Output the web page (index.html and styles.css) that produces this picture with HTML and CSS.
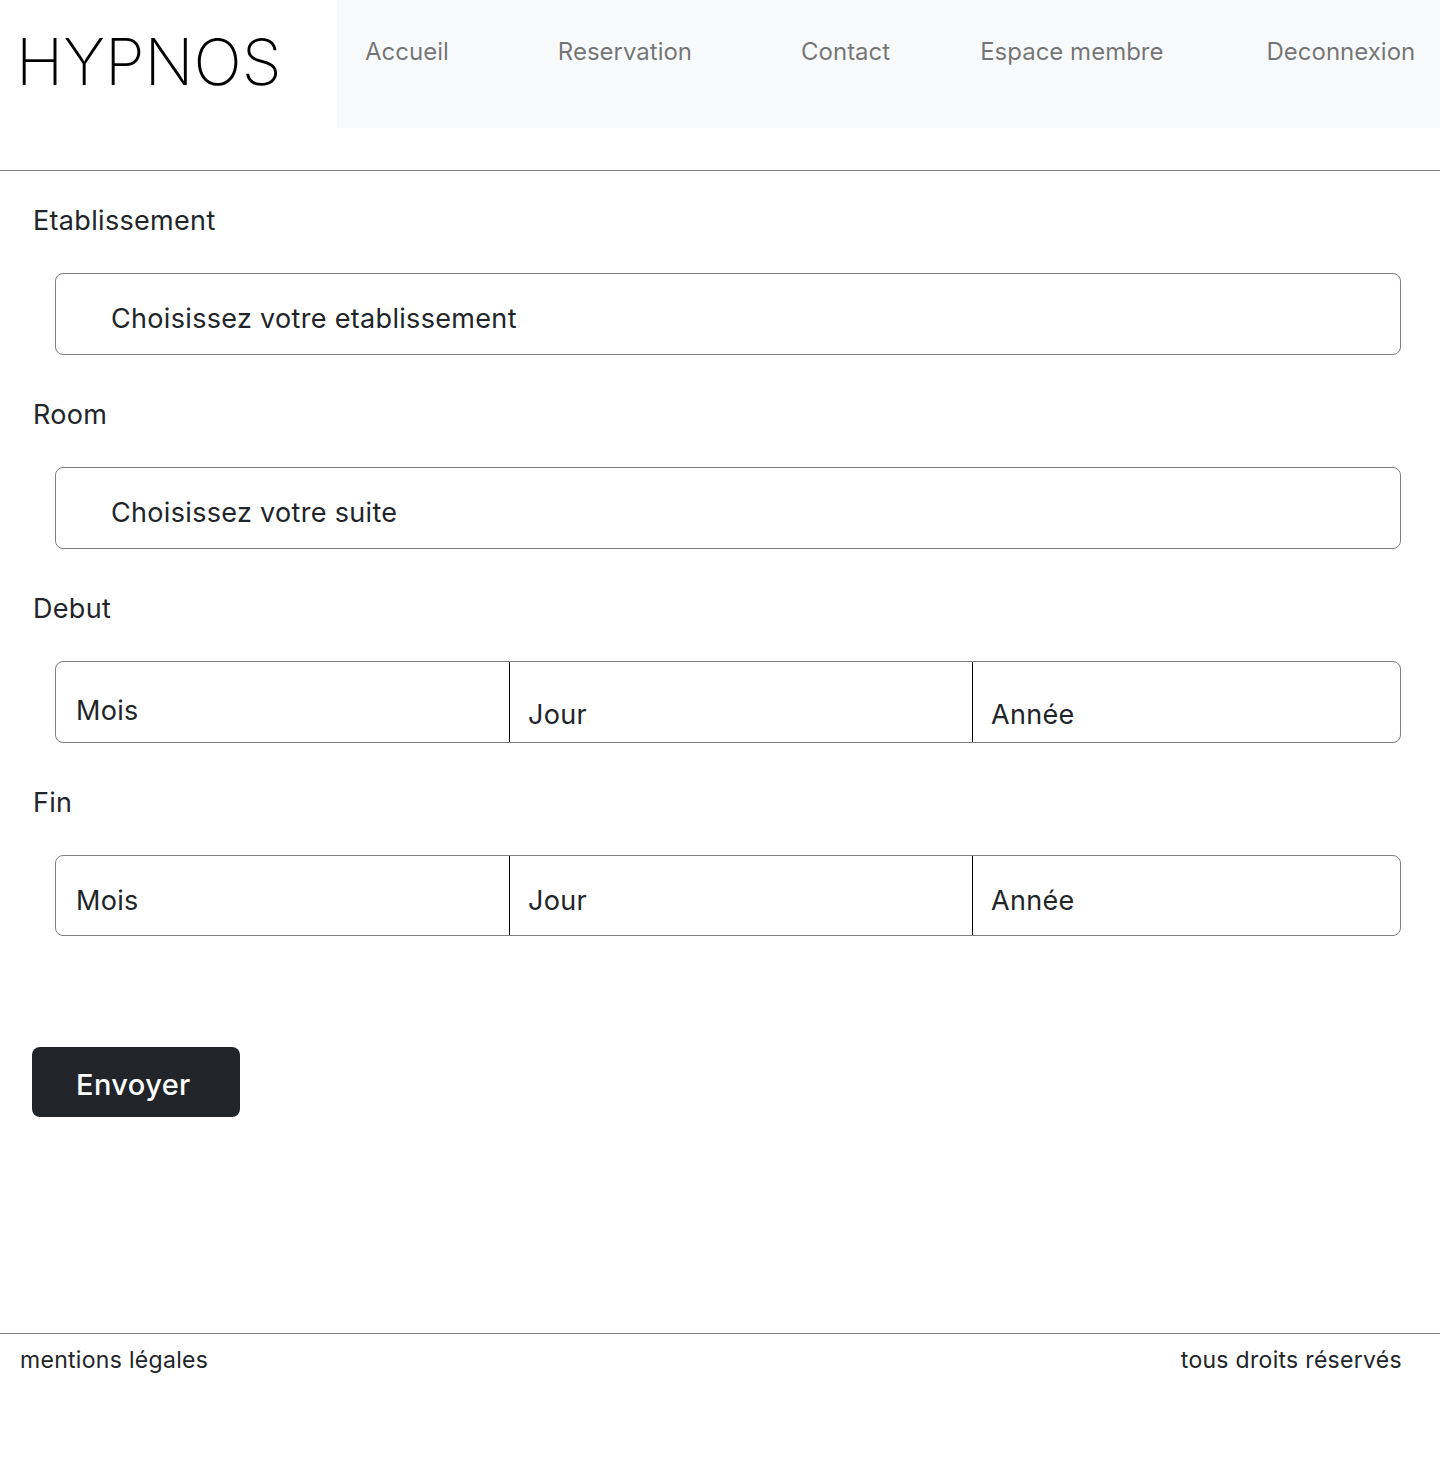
FILE: index.html
```html
<!DOCTYPE html>
<html lang="fr">
<head>
<meta charset="utf-8">
<title>Hypnos - Reservation</title>
<link rel="stylesheet" href="styles.css">
</head>
<body>
<header class="header">
  <div class="brand">HYPNOS</div>
  <nav class="nav">
    <a class="nav-link l1" href="#">Accueil</a>
    <a class="nav-link l2" href="#">Reservation</a>
    <a class="nav-link l3" href="#">Contact</a>
    <a class="nav-link l4" href="#">Espace membre</a>
    <a class="nav-link l5" href="#">Deconnexion</a>
  </nav>
</header>
<hr class="rule top-rule">
<main class="form">
  <div class="field">
    <label class="label">Etablissement</label>
    <div class="select"><span>Choisissez votre etablissement</span></div>
  </div>
  <div class="field">
    <label class="label">Room</label>
    <div class="select"><span>Choisissez votre suite</span></div>
  </div>
  <div class="field">
    <label class="label">Debut</label>
    <div class="dates">
      <div class="cell c1 up">Mois</div>
      <div class="cell c2">Jour</div>
      <div class="cell c3">Année</div>
    </div>
  </div>
  <div class="field">
    <label class="label">Fin</label>
    <div class="dates dates-end">
      <div class="cell c1 mid">Mois</div>
      <div class="cell c2 mid">Jour</div>
      <div class="cell c3 mid">Année</div>
    </div>
  </div>
  <button class="btn" type="button">Envoyer</button>
</main>
<footer class="footer">
  <hr class="rule">
  <div class="footer-row">
    <span>mentions légales</span>
    <span>tous droits réservés</span>
  </div>
</footer>
</body>
</html>
```
FILE: styles.css
```css
* { box-sizing: border-box; }
html, body { margin: 0; padding: 0; }
body {
  font-family: Inter, "Noto Sans", sans-serif;
  color: #212529;
  background: #fff;
  width: 1440px;
  min-height: 1457px;
}
.header {
  display: flex;
  height: 128px;
}
.brand {
  width: 337px;
  padding: 24px 0 0 16px;
  font-size: 64px;
  font-weight: 200;
  color: #000;
  line-height: 1.2;
}
.nav {
  flex: 1;
  background: #f8f9fa;
  display: flex;
  align-items: flex-start;
  padding-top: 36px;
}
.nav-link {
  font-size: 24px;
  line-height: 32px;
  color: rgba(0,0,0,0.55);
  text-decoration: none;
  font-weight: 400;
}
.l1 { margin-left: 28px; }
.l2 { margin-left: 109px; }
.l3 { margin-left: 109px; }
.l4 { margin-left: 90px; }
.l5 { margin-left: 103px; }
.rule {
  border: 0;
  border-top: 1px solid #808080;
  margin: 0;
}
.top-rule { margin-top: 42px; }
.form {
  padding: 0 39px 0 32px;
  letter-spacing: 0.32px;
}
.field {
  display: flex;
  flex-direction: column;
}
.field:first-child { padding-top: 32px; }
.label {
  font-size: 27px;
  line-height: 34px;
  height: 34px;
  margin-bottom: 36px;
  padding: 1px 0 0 1px;
}
.select {
  margin-left: 23px;
  height: 82px;
  border: 1px solid #808080;
  border-radius: 8px;
  padding: 28px 0 0 55px;
  font-size: 27px;
  line-height: 34px;
  margin-bottom: 42px;
}
.dates {
  margin-left: 23px;
  height: 82px;
  border: 1px solid #808080;
  border-radius: 8px;
  display: grid;
  grid-template-columns: 453px 463px 1fr;
  margin-bottom: 42px;
  font-size: 27px;
  line-height: 34px;
}
.dates-end {
  height: 81px;
  margin-bottom: 43px;
}
.cell { padding: 36px 0 0 20px; }
.cell.up { padding-top: 32px; }
.cell.mid { padding-top: 28px; }
.c2, .c3 { border-left: 1px solid #000; }
.c2 { padding-left: 18px; }
.c3 { padding-left: 18px; }
.btn {
  margin-top: 68px;
  width: 208px;
  height: 70px;
  background: #212529;
  color: #fff;
  border: 0;
  border-radius: 8px;
  font-family: inherit;
  font-size: 29px;
  font-weight: 500;
  letter-spacing: 0.4px;
  text-align: left;
  padding: 4px 0 0 44px;
  display: block;
}
.footer {
  margin-top: 216px;
}
.footer-row {
  display: flex;
  justify-content: space-between;
  padding: 11px 38px 0 20px;
  font-size: 23px;
  line-height: 30px;
  letter-spacing: 0.3px;
}
```
